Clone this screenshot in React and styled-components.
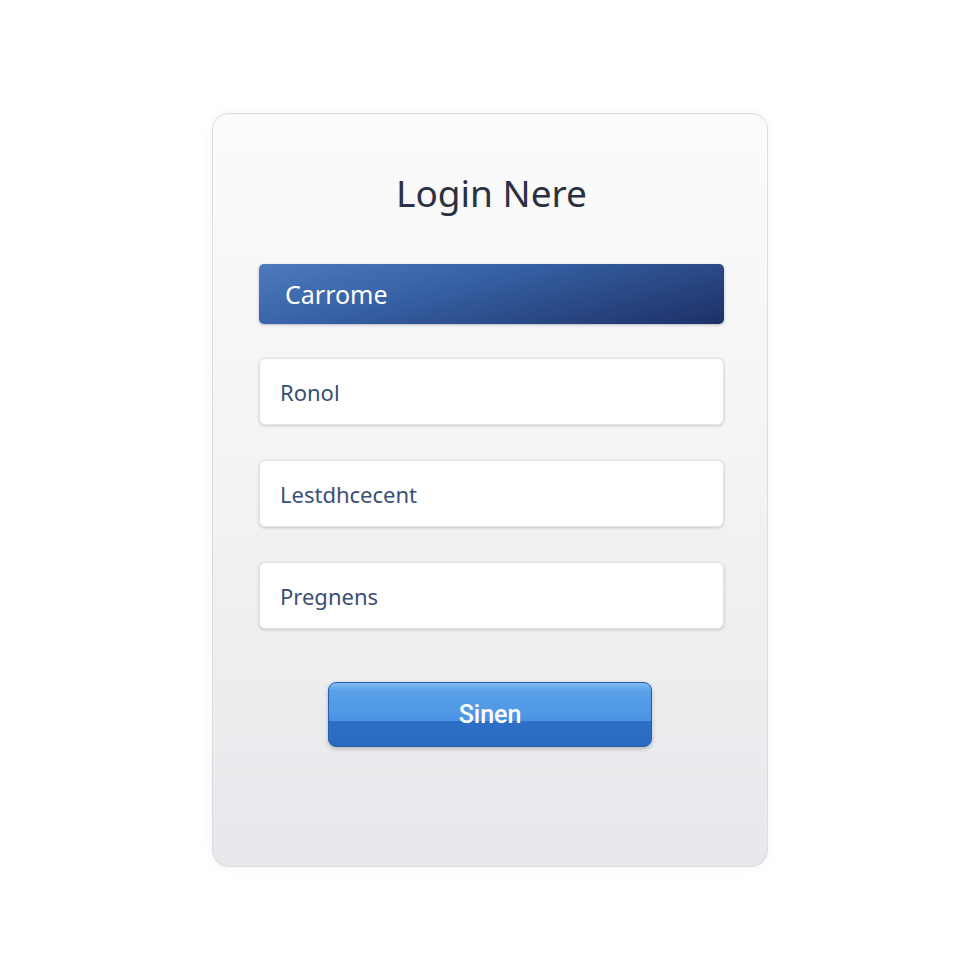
import React from "react";
import styled, { createGlobalStyle } from "styled-components";

const GlobalStyle = createGlobalStyle`
  html, body {
    margin: 0;
    padding: 0;
    background: #ffffff;
  }
`;

export default function App() {
  const fields = ["Ronol", "Lestdhcecent", "Pregnens"];
  return (
    <>
      <GlobalStyle />
      <Page>
        <Card>
          <Title>Login Nere</Title>
          <Banner>Carrome</Banner>
          <Fields>
            {fields.map((f) => (
              <Field key={f}>{f}</Field>
            ))}
          </Fields>
          <SubmitRow>
            <Submit>Sinen</Submit>
          </SubmitRow>
        </Card>
      </Page>
    </>
  );
}

const Page = styled.div`
  display: flex;
  justify-content: center;
  padding-top: 113px;
  min-height: 980px;
  box-sizing: border-box;
`;

const Card = styled.div`
  width: 556px;
  height: 754px;
  box-sizing: border-box;
  padding: 59px 43px 0 46px;
  border-radius: 16px;
  border: 1px solid #dcdde0;
  background: linear-gradient(180deg, #fbfbfb 0%, #f4f4f5 45%, #e7e8eb 100%);
  box-shadow: 0 0 14px rgba(0, 0, 0, 0.04);
  display: flex;
  flex-direction: column;
`;

const Title = styled.h1`
  margin: 0;
  height: 40px;
  line-height: 40px;
  text-align: center;
  font-family: "Noto Sans", "Open Sans", sans-serif;
  font-weight: 400;
  font-size: 37px;
  color: #2a3142;
`;

const Banner = styled.div`
  margin-top: 51px;
  height: 60px;
  border-radius: 5px;
  padding-left: 26px;
  display: flex;
  align-items: center;
  font-family: "Noto Sans", "Open Sans", sans-serif;
  font-size: 25px;
  color: #ffffff;
  background: linear-gradient(165deg, #4d7bbe 0%, #3660a3 40%, #1d3066 100%);
  box-shadow: 0 1px 3px rgba(20, 40, 90, 0.3);
`;

const Fields = styled.div`
  margin-top: 34px;
  display: flex;
  flex-direction: column;
  gap: 35px;
`;

const Field = styled.div`
  height: 67px;
  box-sizing: border-box;
  border-radius: 6px;
  border: 1px solid #e1e2e6;
  background: #ffffff;
  box-shadow: 0 1px 3px rgba(0, 0, 0, 0.18);
  padding-left: 20px;
  display: flex;
  align-items: center;
  font-family: "Noto Sans", "Open Sans", sans-serif;
  font-size: 22px;
  color: #3a4f76;
`;

const SubmitRow = styled.div`
  margin-top: 53px;
  display: flex;
  justify-content: center;
  padding-right: 3px;
`;

const Submit = styled.button`
  width: 324px;
  height: 65px;
  border-radius: 8px;
  border: 1px solid #2a5db0;
  background: linear-gradient(
    180deg,
    #80bdf2 0%,
    #5aa1ea 12%,
    #4b92e2 61%,
    #2e70c6 61%,
    #2a6bc2 100%
  );
  box-shadow: 0 2px 4px rgba(0, 0, 0, 0.22);
  color: #ffffff;
  font-family: Roboto, "Liberation Sans", sans-serif;
  font-weight: 500;
  font-size: 25px;
  padding: 0;
  cursor: pointer;
`;
